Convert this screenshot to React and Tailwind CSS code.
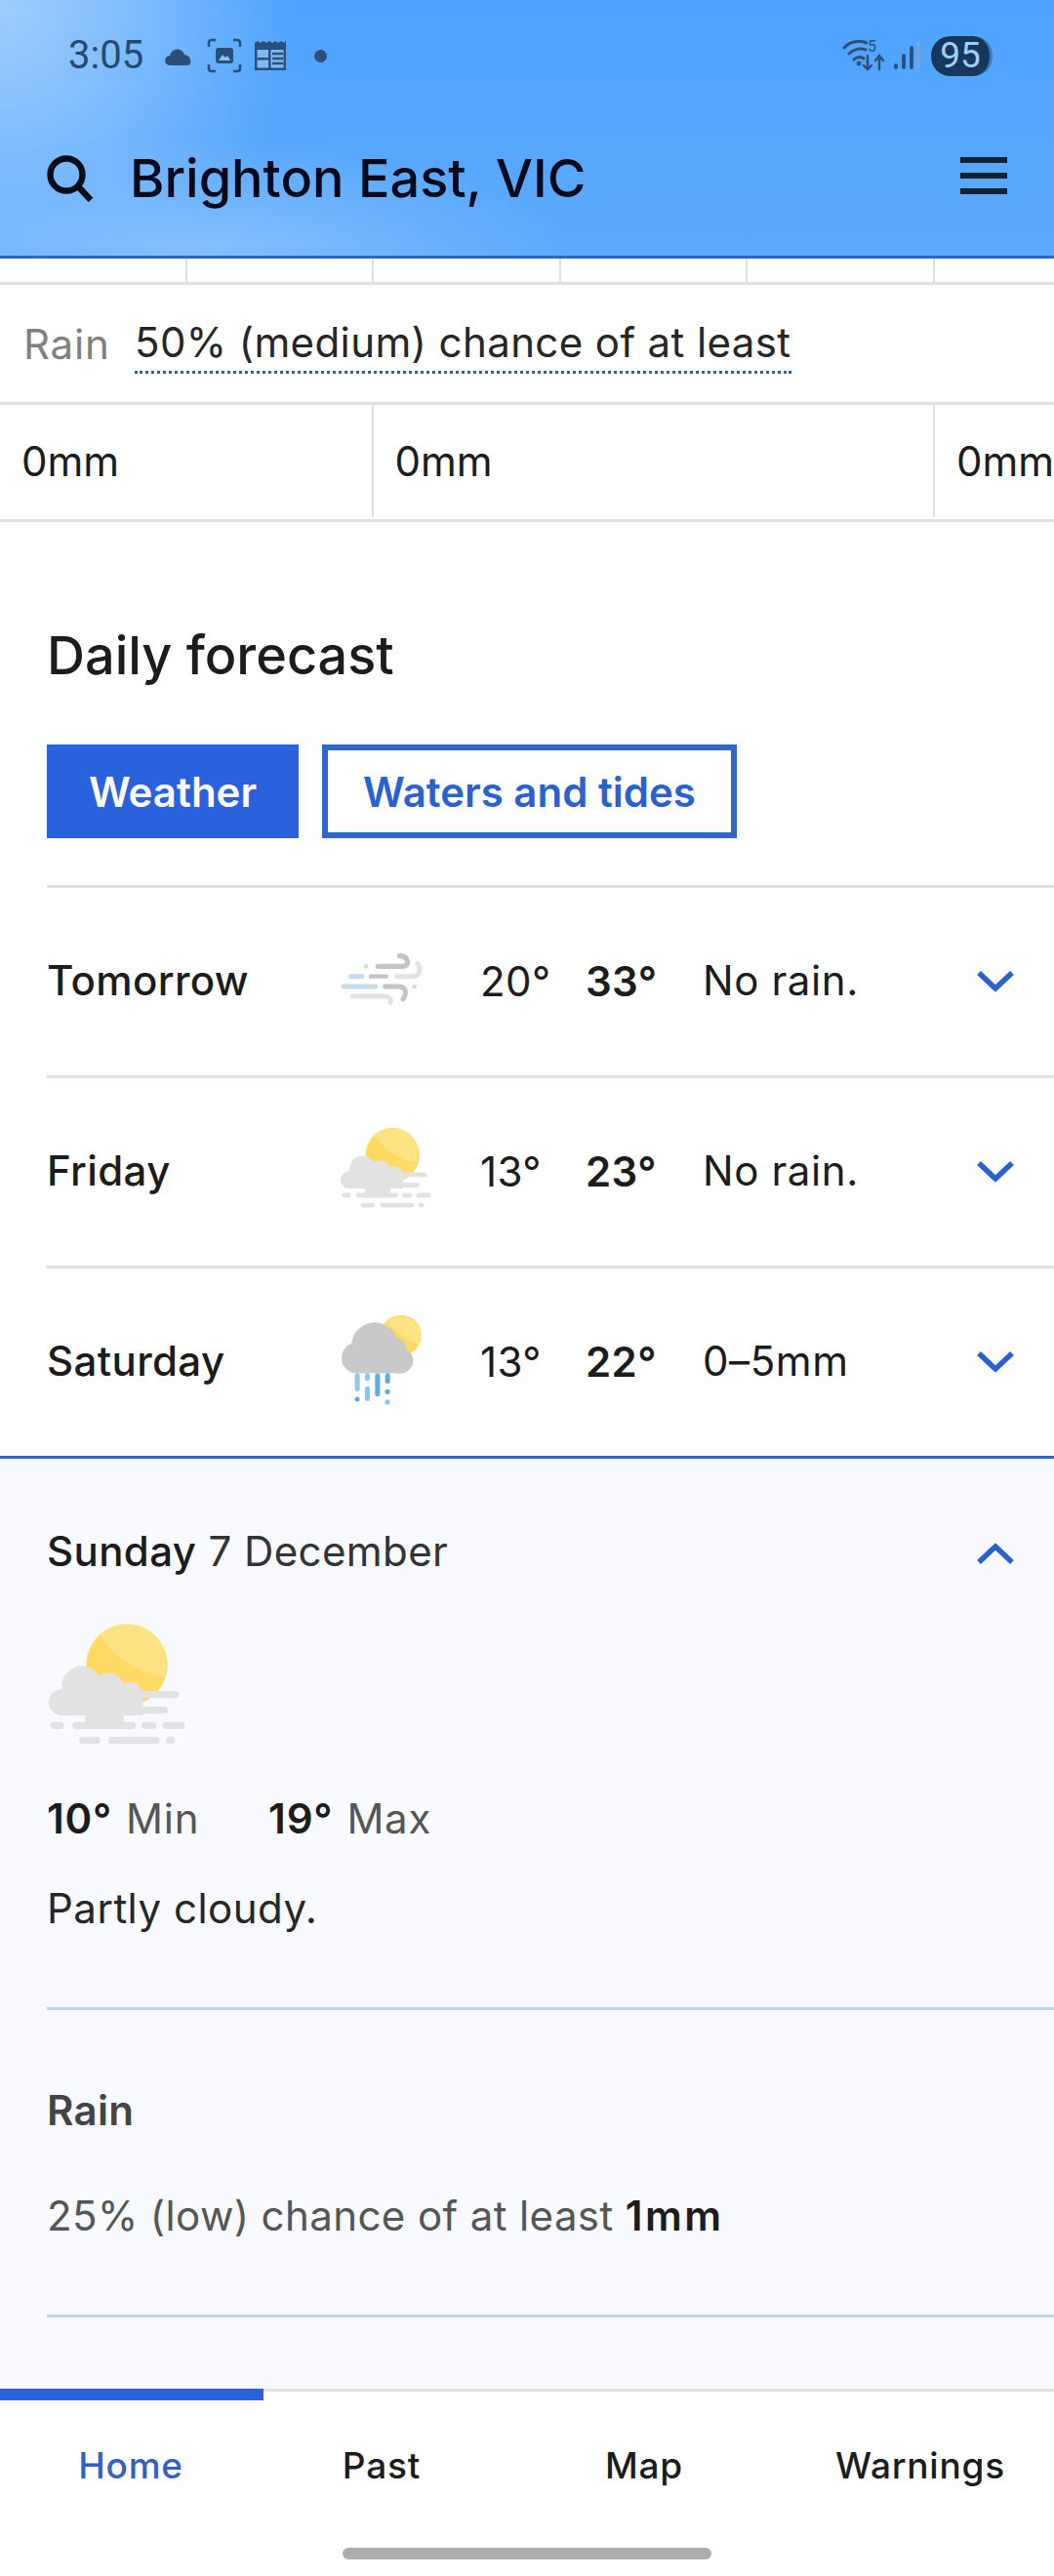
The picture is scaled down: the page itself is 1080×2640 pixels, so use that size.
import React from "react";

const font = { fontFamily: "Inter, 'Noto Sans', sans-serif" };

function SunCloud({ className }) {
  return (
    <svg viewBox="150 130 420 375" className={className}>
      <circle cx="390" cy="260" r="125" fill="#ffda63" />
      <path d="M306 168 C350 235 420 280 505 298 C520 240 500 180 455 153 C405 122 345 130 306 168Z" fill="#ffe383" />
      <g fill="#e2e2e2">
        <circle cx="190" cy="375" r="40" />
        <circle cx="252" cy="325" r="62" />
        <circle cx="335" cy="330" r="45" />
        <circle cx="400" cy="350" r="38" />
        <rect x="190" y="350" width="250" height="65" />
        <rect x="262" y="400" width="118" height="50" />
        <rect x="400" y="340" width="150" height="22" rx="11" />
        <rect x="400" y="388" width="116" height="22" rx="11" />
        <rect x="155" y="435" width="42" height="22" rx="11" />
        <rect x="222" y="435" width="195" height="22" rx="11" />
        <rect x="435" y="435" width="46" height="22" rx="11" />
        <rect x="500" y="435" width="68" height="22" rx="11" />
        <rect x="243" y="481" width="65" height="22" rx="11" />
        <rect x="333" y="481" width="157" height="22" rx="11" />
        <rect x="510" y="481" width="27" height="22" rx="11" />
      </g>
    </svg>
  );
}

function Wind({ className }) {
  return (
    <svg viewBox="85 75 255 165" className={className} fill="none" strokeLinecap="round">
      <path d="M200 121H278C296 121 298 90 266 89" stroke="#c4c4c4" strokeWidth="16" />
      <path d="M258 152H305C328 152 334 130 322 113" stroke="#e3e3e3" strokeWidth="15" />
      <path d="M117 152H150" stroke="#c8d9e8" strokeWidth="15" />
      <path d="M178 152H226" stroke="#c4c4c4" strokeWidth="13" />
      <path d="M94 183H192" stroke="#c8d9e8" strokeWidth="15" />
      <path d="M222 183H264C286 183 290 205 277 222" stroke="#c4c4c4" strokeWidth="15" />
      <path d="M122 213H220C234 213 242 222 238 232" stroke="#e3e3e3" strokeWidth="15" />
      <circle cx="163" cy="121" r="7" fill="#d2e0c2" />
      <circle cx="312" cy="183" r="7" fill="#d2e0c2" />
    </svg>
  );
}

function RainSun({ className }) {
  return (
    <svg viewBox="85 1190 255 285" className={className}>
      <circle cx="270" cy="1258" r="63" fill="#ffda63" />
      <path d="M228 1211C262 1185 315 1200 330 1245C332 1262 330 1275 325 1285C290 1280 255 1250 228 1211Z" fill="#ffe383" />
      <g fill="#c9c9c9">
        <circle cx="190" cy="1290" r="72" />
        <circle cx="135" cy="1327" r="47" />
        <circle cx="250" cy="1300" r="36" />
        <circle cx="268" cy="1335" r="40" />
        <rect x="135" y="1310" width="135" height="64" />
      </g>
      <rect x="129" y="1374" width="15" height="56" rx="7" fill="#93c6e8" />
      <rect x="160" y="1374" width="15" height="24" rx="7" fill="#93c6e8" />
      <rect x="160" y="1414" width="15" height="46" rx="7" fill="#93c6e8" />
      <rect x="191" y="1374" width="15" height="72" rx="7" fill="#62aadb" />
      <rect x="222" y="1374" width="15" height="32" rx="7" fill="#62aadb" />
      <circle cx="136" cy="1454" r="7.5" fill="#62aadb" />
      <circle cx="229" cy="1431" r="8" fill="#62aadb" />
      <circle cx="229" cy="1463" r="8" fill="#93c6e8" />
    </svg>
  );
}

function Chevron({ up }) {
  return (
    <svg viewBox="0 0 38 22" className="w-[38px] h-[22px]">
      <path d={up ? "M2 20L19 4L36 20" : "M2 2L19 18L36 2"} fill="none" stroke="#2962d0" strokeWidth="5.5" />
    </svg>
  );
}

function ForecastRow({ day, icon, min, max, text }) {
  return (
    <div className="h-[195px] border-t-[3px] border-[#e1e1e1] ml-12 flex items-center text-[42px] text-[#1c1c1c] tracking-[0.4px]">
      <div className="w-[301px] font-medium pb-[3px]">{day}</div>
      <div className="w-[143px] flex items-center">{icon}</div>
      <div className="w-[108px] pb-[2px]">{min}</div>
      <div className="w-[120px] font-semibold pb-[2px]">{max}</div>
      <div className="w-[281px] pb-[3px] tracking-[0.6px]">{text}</div>
      <Chevron />
    </div>
  );
}

function StatusBar() {
  return (
    <div className="h-[114px] pl-[70px] pr-[63px] flex items-center justify-between text-[#27496e]">
      <div className="flex items-center">
        <span className="text-[40px] w-[98px]" style={{ fontFamily: "Roboto, sans-serif" }}>3:05</span>
        <svg viewBox="0 0 30 22" className="w-[30px] h-[22px] mr-[14px]">
          <path d="M6 21C0 21 -1 12 6 11C8 3 18 2 21 10C27 10 31 21 23 21Z" fill="#2b4f78" />
        </svg>
        <svg viewBox="0 0 36 36" className="w-9 h-9 mr-[12px]" fill="none" stroke="#2b4f78" strokeWidth="2.6">
          <path d="M9 2H5C3 2 2 3 2 5V9M27 2H31C33 2 34 3 34 5V9M2 27V31C2 33 3 34 5 34H9M34 27V31C34 33 33 34 31 34H27" />
          <rect x="9" y="10" width="18" height="16" rx="3" fill="#2b4f78" stroke="none" />
          <path d="M12 23L16 17L19 20L21 18L24 23Z" fill="#8fc4f5" stroke="none" />
        </svg>
        <svg viewBox="0 0 34 32" className="w-[34px] h-8 mr-[28px]">
          <path d="M1 3L4 1L7 3L10 1L13 3L16 1L19 3L22 1L25 3L28 1L31 3L33 1V31H1Z" fill="#2b4f78" />
          <rect x="3.5" y="10" width="27" height="18.5" fill="#7fb9f6" />
          <rect x="15" y="10" width="2.5" height="19" fill="#2b4f78" />
          <rect x="3.5" y="18" width="12" height="2.5" fill="#2b4f78" />
          <path d="M19 14H30M19 19H30M19 24H30" stroke="#2b4f78" strokeWidth="2.4" />
        </svg>
        <span className="w-[13px] h-[13px] rounded-full bg-[#2b4f78]" />
      </div>
      <div className="flex items-center">
        <div className="relative w-11 h-8 mr-[8px] overflow-visible">
          <svg viewBox="0 0 44 32" className="w-11 h-8" fill="none" stroke="#2b4f78" strokeWidth="3" strokeLinecap="round">
            <path d="M2 8C8 1 18 0 25 3" />
            <path d="M7 14C12 9 19 8 24 10" />
            <path d="M12 20C15 17 19 17 22 19" />
            <circle cx="17" cy="24" r="2.4" fill="#2b4f78" stroke="none" />
            <path d="M26 16V30M22 26L26 30L30 26M38 30V17M34 21L38 16L42 21" strokeWidth="2.4" />
          </svg>
          <span className="absolute left-[26px] -top-[2px] text-[16px] leading-[18px] text-[#2b4f78]" style={{ fontFamily: "Roboto, sans-serif" }}>5</span>
        </div>
        <svg viewBox="0 0 28 30" className="w-7 h-[30px] mr-[11px]" fill="none" strokeLinecap="round" strokeWidth="3.8">
          <path d="M3 25V27M11 15V27M19 7V27" stroke="#2b4f78" />
          <path d="M26 2V27" stroke="#74a6dc" />
        </svg>
        <div className="w-[63px] h-[41px] rounded-[20px] bg-[#17375c] border-r-[3px] border-[#3f78b4] text-[#9fd0f8] flex items-center justify-center text-[37px]" style={{ fontFamily: "Roboto, sans-serif" }}>95</div>
      </div>
    </div>
  );
}

export default function App() {
  return (
    <div className="w-[1080px] h-[2640px] flex flex-col overflow-hidden bg-white" style={font}>
      <header className="h-[265px] shrink-0 border-b-[3px] border-[#2f66c8] bg-[radial-gradient(ellipse_300px_330px_at_0px_0px,#a0cdfb_0%,#7fbcfd_45%,rgba(82,165,255,0)_100%),radial-gradient(ellipse_400px_120px_at_190px_262px,#86c0fb_0%,rgba(82,165,255,0)_100%),linear-gradient(180deg,#4fa3ff_0%,#5ba9fd_100%)]">
        <StatusBar />
        <div className="h-[136px] pl-12 pr-12 pt-[2px] flex items-center justify-between">
          <div className="flex items-center">
            <svg viewBox="0 0 48 48" className="w-12 h-12 mr-[37px]" fill="none" stroke="#070d18" strokeWidth="6.4">
              <circle cx="20" cy="20" r="16.5" />
              <path d="M31 31L45 46" />
            </svg>
            <h1 className="text-[54px] font-medium text-[#05091a] leading-none">Brighton East, VIC</h1>
          </div>
          <div className="w-12 flex flex-col gap-[10px] -mt-[6px]">
            <div className="h-[6px] bg-[#17202e]" />
            <div className="h-[6px] bg-[#17202e]" />
            <div className="h-[6px] bg-[#17202e]" />
          </div>
        </div>
      </header>

      <main className="flex-1 min-h-0 overflow-hidden">
        <div className="h-[27px] flex border-b-[3px] border-[#e1e1e1]">
          {[0, 1, 2, 3, 4, 5].map((i) => (
            <div key={i} className="w-[191.6px] shrink-0 border-r-[2px] border-[#e1e1e1]" />
          ))}
        </div>
        <div className="h-[123px] flex items-center pl-6 text-[42px] border-b-[3px] border-[#e1e1e1]">
          <span className="w-[114px] text-[#808080] tracking-[0.8px]">Rain</span>
          <span className="text-[#262626] border-b-[3px] border-dotted border-[#2f5f9f] leading-[58px] tracking-[0.4px]">50% (medium) chance of at least</span>
        </div>
        <div className="h-[120px] pb-[2px] flex text-[42px] text-[#1c1c1c] border-b-[3px] border-[#e1e1e1]">
          <div className="w-[383px] pl-[22px] flex items-center border-r-[2px] border-[#e1e1e1]">0mm</div>
          <div className="w-[576px] pl-[22px] flex items-center border-r-[2px] border-[#e1e1e1]">0mm</div>
          <div className="pl-[22px] flex items-center">0mm</div>
        </div>

        <h2 className="ml-12 mt-[102px] text-[54px] leading-[70px] font-medium text-[#1c1c1c]">Daily forecast</h2>
        <div className="ml-12 mt-[56px] flex gap-6 text-[42px] font-semibold">
          <div className="w-[258px] h-[96px] bg-[#2962dc] text-white flex items-center justify-center">Weather</div>
          <div className="w-[425px] h-[96px] border-[6px] border-[#2f66c8] text-[#2962d0] flex items-center justify-center">Waters and tides</div>
        </div>
        <div className="mt-[48px]">
          <ForecastRow day="Tomorrow" min="20°" max="33°" text="No rain." icon={<Wind className="w-[85px] h-[55px] -mt-[8px]" />} />
          <ForecastRow day="Friday" min="13°" max="23°" text="No rain." icon={<SunCloud className="w-[93px] h-[83px] -mt-[10px]" />} />
          <ForecastRow day="Saturday" min="13°" max="22°" text="0–5mm" icon={<RainSun className="w-[85px] h-[95px] -mt-[5px]" />} />
        </div>

        <section className="bg-[#f8faff] border-t-[3px] border-[#2f66c8] h-[960px] pl-12">
          <div className="h-[194px] pt-[66px] pr-[41px] flex items-start justify-between text-[42px] text-[#1c1c1c] tracking-[0.4px]">
            <div className="leading-[58px]"><span className="font-medium">Sunday</span> <span className="text-[#333333]">7 December</span></div>
            <div className="pt-[20px]"><Chevron up /></div>
          </div>
          <SunCloud className="w-[140px] h-[125px] -mt-[26px] ml-[2px]" />
          <div className="mt-[47px] flex items-baseline text-[42px] leading-[58px] tracking-[0.8px]">
            <span className="font-semibold text-[#1c1c1c] mr-[14px]">10°</span>
            <span className="text-[#555555] w-[146px]">Min</span>
            <span className="font-semibold text-[#1c1c1c] mr-[14px]">19°</span>
            <span className="text-[#555555]">Max</span>
          </div>
          <p className="mt-[34px] text-[42px] leading-[58px] text-[#262626] tracking-[0.5px]">Partly cloudy.</p>
          <div className="mt-[72px] border-t-[3px] border-[#c3d4ea]" />
          <h3 className="mt-[74px] text-[42px] leading-[58px] font-semibold text-[#444444] tracking-[0.3px]">Rain</h3>
          <p className="mt-[50px] text-[42px] leading-[58px] text-[#555555] tracking-[0.4px]">25% (low) chance of at least <span className="font-semibold text-[#1c1c1c] tracking-[2.4px]">1mm</span></p>
          <div className="mt-[72px] border-t-[3px] border-[#c3d4ea]" />
        </section>
      </main>

      <nav className="h-[192px] shrink-0 relative border-t-[3px] border-[#e1e1e1] bg-white">
        <div className="absolute left-0 -top-[3px] w-[270px] h-3 bg-[#2962dc]" />
        <div className="h-[150px] pt-[48px] flex text-[37px] font-medium text-[#1c1c1c] tracking-[0.8px] text-center">
          <span className="w-[268px] text-[#2f62c4]">Home</span>
          <span className="w-[246px]">Past</span>
          <span className="w-[292px]">Map</span>
          <span className="w-[274px]">Warnings</span>
        </div>
        <div className="mx-auto w-[378px] h-3 rounded-full bg-[#adadad] mt-[10px]" />
      </nav>
    </div>
  );
}
